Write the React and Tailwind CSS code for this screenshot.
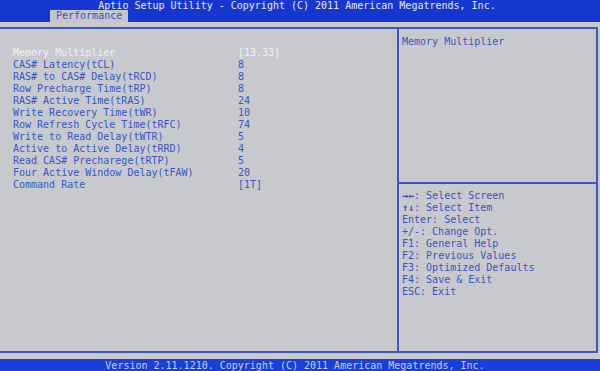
import React from "react";

const rows = [
  ["Memory Multiplier", "[13.33]", true],
  ["CAS# Latency(tCL)", "8"],
  ["RAS# to CAS# Delay(tRCD)", "8"],
  ["Row Precharge Time(tRP)", "8"],
  ["RAS# Active Time(tRAS)", "24"],
  ["Write Recovery Time(tWR)", "10"],
  ["Row Refresh Cycle Time(tRFC)", "74"],
  ["Write to Read Delay(tWTR)", "5"],
  ["Active to Active Delay(tRRD)", "4"],
  ["Read CAS# Precharege(tRTP)", "5"],
  ["Four Active Window Delay(tFAW)", "20"],
  ["Command Rate", "[1T]"],
];

const help = [
  [<span className="font-bold">→←</span>, ": Select Screen"],
  [<span className="font-bold">↑↓</span>, ": Select Item"],
  ["Enter", ": Select"],
  ["+/-", ": Change Opt."],
  ["F1", ": General Help"],
  ["F2", ": Previous Values"],
  ["F3", ": Optimized Defaults"],
  ["F4", ": Save & Exit"],
  ["ESC", ": Exit"],
];

export default function App() {
  return (
    <div
      className="w-[600px] h-[371px] overflow-hidden flex flex-col bg-[#c8c9cc] text-[10px] text-[#3656c8] whitespace-pre"
      style={{ fontFamily: '"DejaVu Sans Mono", "Liberation Mono", monospace' }}
    >
      {/* header */}
      <div className="h-[22px] bg-[#1637cf] flex flex-col shrink-0">
        <div className="h-[10px] leading-[11px] text-center text-[#e6e8f4] pr-[6px]">
          Aptio Setup Utility - Copyright (C) 2011 American Megatrends, Inc.
        </div>
        <div className="h-[12px] pl-[50px] flex">
          <div className="bg-[#c4c6c9] px-[6px] leading-[12px] text-[#3656c8]">Performance</div>
        </div>
      </div>

      <div className="h-[5px] shrink-0" />

      {/* main frame */}
      <div className="h-[326px] w-[598px] flex border-t-2 border-b-2 border-r-2 border-[#3c58c4] shrink-0">
        <div className="w-[399px] border-r-2 border-[#3c58c4] pt-[18px] pl-[13px]">
          {rows.map(([label, value, sel], i) => (
            <div key={i} className={`flex h-[12px] leading-[12px] ${sel ? "text-[#eef0f6]" : ""}`}>
              <span className="w-[225px]">{label}</span>
              <span>{value}</span>
            </div>
          ))}
        </div>
        <div className="flex-1 flex flex-col">
          <div className="h-[155px] border-b-2 border-[#3c58c4] pt-[7px] pl-[3px] leading-[12px]">
            Memory Multiplier
          </div>
          <div className="pt-[6px] pl-[3px]">
            {help.map(([k, v], i) => (
              <div key={i} className="h-[12px] leading-[12px]">
                {k}
                {v}
              </div>
            ))}
          </div>
        </div>
      </div>

      <div className="h-[6px] shrink-0" />

      {/* footer */}
      <div className="flex-1 bg-[#1a3fd6] text-[#c9cde6] text-center leading-[14px] pr-[10px]">
        Version 2.11.1210. Copyright (C) 2011 American Megatrends, Inc.
      </div>
    </div>
  );
}
